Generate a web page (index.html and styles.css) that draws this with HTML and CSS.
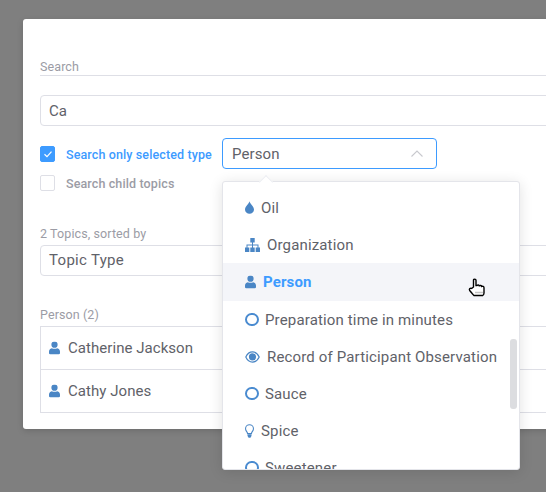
FILE: index.html
```html
<!DOCTYPE html>
<html lang="en">
<head>
    <meta charset="UTF-8">
    <title>Search</title>
    <link rel="stylesheet" href="styles.css">
</head>
<body>
    <div class="dialog">
        <div class="section-label">Search</div>
        <div class="text-input">Ca</div>

        <div class="option-row">
            <span class="check checked">
                <svg viewBox="0 0 16 16" width="16" height="16"><path d="M4.500 8.200l2.500 2.400 4.500-5" fill="none" stroke="#fff" stroke-width="1.200"/></svg>
            </span>
            <span class="option-label active">Search only selected type</span>
            <div class="select open">
                Person
                <svg class="caret" viewBox="0 0 12 7" width="12" height="7"><path d="M0.500 6.500L6 1l5.500 5.500" fill="none" stroke="#c8c9ce" stroke-width="1.100"/></svg>
            </div>
        </div>
        <div class="option-row second">
            <span class="check"></span>
            <span class="option-label">Search child topics</span>
        </div>

        <div class="small-label sort-label">2 Topics, sorted by</div>
        <div class="text-input sort">Topic Type</div>

        <div class="small-label group-label">Person (2)</div>
        <div class="result-list">
            <div class="result">
                <svg class="icon" viewBox="0 0 12 14" width="11" height="14"><use href="#user"/></svg>
                Catherine Jackson
            </div>
            <div class="result">
                <svg class="icon" viewBox="0 0 12 14" width="11" height="14"><use href="#user"/></svg>
                Cathy Jones
            </div>
        </div>
    </div>

    <div class="menu">
        <div class="menu-item">
            <svg class="icon" viewBox="0 0 10 14" width="9" height="13"><path d="M5 0C5.600 2.600 10 6 10 9.200A5 4.800 0 0 1 0 9.200C0 6 4.400 2.600 5 0z"/></svg>
            Oil
        </div>
        <div class="menu-item">
            <svg class="icon" viewBox="0 0 15 14" width="15" height="14"><path d="M5.300 0h4.400v4.500H8V6.500h5.500V9.500h-1V7.500H8v2H7v-2H2.500v2h-1V6.500H7V4.500H5.300zM0 9.500h4.300V14H0zM5.300 9.500h4.400V14H5.300zM10.700 9.500H15V14h-4.300z"/></svg>
            Organization
        </div>
        <div class="menu-item hover">
            <svg class="icon" viewBox="0 0 12 14" width="11" height="14"><use href="#user"/></svg>
            Person
        </div>
        <div class="menu-item">
            <span class="ring"></span>
            Preparation time in minutes
        </div>
        <div class="menu-item">
            <svg class="icon" viewBox="0 0 15 12" width="15" height="12">
                <path d="M0.800 6C2.300 2.700 4.700 0.900 7.500 0.900S12.700 2.700 14.200 6C12.700 9.300 10.300 11.100 7.500 11.100S2.300 9.300 0.800 6z" fill="none" stroke="#4a86c5" stroke-width="1.200"/>
                <circle cx="7.500" cy="5.800" r="3.600"/>
            </svg>
            Record of Participant Observation
        </div>
        <div class="menu-item">
            <span class="ring"></span>
            Sauce
        </div>
        <div class="menu-item">
            <svg class="icon" viewBox="0 0 10 15" width="9" height="14"><path d="M5 0a5 5 0 0 0-5 5c0 2.400 1.900 3.400 2.400 6h5.200C8.100 8.400 10 7.400 10 5a5 5 0 0 0-5-5zm0 1.200A3.800 3.800 0 0 1 8.800 5c0 1.700-1.500 2.600-2.200 4.800H3.400C2.700 7.600 1.200 6.700 1.200 5A3.800 3.800 0 0 1 5 1.200zM2.800 11.500h4.400v1.500L6 15H4L2.800 13z"/></svg>
            Spice
        </div>
        <div class="menu-item">
            <span class="ring"></span>
            Sweetener
        </div>
        <div class="scroll-thumb"></div>
    </div>
    <div class="menu-arrow"></div>

    <svg class="pointer" viewBox="0 0 18 19" width="18" height="19">
        <path d="M5.500 9V2.200c0-1.500 2.500-1.500 2.500 0V7.500h1c.8-.8 2-.6 2.300.3.800-.6 2.200-.3 2.400.7.900-.5 2.300 0 2.300 1.300V15c0 1.200-.5 2-1.300 2.500H6c-.8-.3-1-1-1.600-1.700L1.700 12.500C.7 11 2.300 9.600 3.700 10.500z" fill="#fff" stroke="#000" stroke-width="1.400"/>
        <path d="M7.500 14.500h7" stroke="#888" stroke-width="1.300" stroke-dasharray="1 1"/>
    </svg>

    <svg class="defs" width="0" height="0">
        <symbol id="user" viewBox="0 0 12 14">
            <path d="M6 0a3.400 3.400 0 1 1 0 6.800A3.400 3.400 0 0 1 6 0zM3 7.200c1.800 1 4.200 1 6 0 1.900.3 3 1.800 3 3.800v1.500c0 .9-.6 1.500-1.500 1.500h-9C.6 14 0 13.400 0 12.500V11c0-2 1.100-3.500 3-3.800z"/>
        </symbol>
    </svg>
</body>
</html>
```

FILE: styles.css
```css
html, body {
    height: 100%;
}
body {
    margin: 0;
    overflow: hidden;
    background-color: #7f7f7f;
    font-family: Roboto, sans-serif;
    font-size: 15px;
    letter-spacing: 0.1px;
    color: #5f6269;
}
.dialog {
    width: 560px;
    height: 410px;
    box-sizing: border-box;
    margin: 19px 0 0 23px;
    padding: 41px 0 0 17px;
    background-color: #fff;
    border-radius: 3px;
    box-shadow: 0 2px 6px rgba(0, 0, 0, 0.15);
}
.section-label {
    height: 15px;
    border-bottom: 1px solid #dedfe6;
    font-size: 12.5px;
    line-height: 13px;
    color: #9b9ca5;
}
.text-input {
    height: 29px;
    margin-top: 19px;
    padding-left: 8px;
    border: 1px solid #dedfe6;
    border-radius: 4px;
    line-height: 31px;
}
.option-row {
    display: flex;
    align-items: center;
    height: 31px;
    margin-top: 12px;
}
.option-row.second {
    height: 16px;
    margin-top: 6px;
}
.check {
    flex: none;
    box-sizing: border-box;
    width: 15px;
    height: 16px;
    margin-right: 11px;
    border: 1px solid #dedfe6;
    border-radius: 2px;
}
.check.checked {
    background-color: #3d9bff;
    border-color: #3d9bff;
}
.check svg {
    display: block;
    margin: -1px 0 0 -1px;
}
.option-label {
    width: 156px;
    font-size: 12.5px;
    font-weight: 500;
    letter-spacing: 0.12px;
    color: #9b9ca5;
    white-space: nowrap;
}
.option-label.active {
    padding-top: 2px;
    color: #3d9bff;
}
.select {
    position: relative;
    box-sizing: border-box;
    width: 215px;
    height: 31px;
    padding-left: 9px;
    border: 1px solid #3d9bff;
    border-radius: 4px;
    line-height: 31px;
}
.caret {
    position: absolute;
    right: 13px;
    top: 11px;
}
.small-label {
    height: 15px;
    font-size: 12.5px;
    line-height: 15px;
    color: #9b9ca5;
}
.sort-label {
    margin-top: 35px;
}
.text-input.sort {
    margin-top: 4px;
    line-height: 29px;
    letter-spacing: 0.3px;
}
.group-label {
    margin-top: 31px;
}
.result-list {
    margin-top: 4px;
    border-top: 1px solid #dedfe6;
    border-left: 1px solid #dedfe6;
}
.result {
    display: flex;
    align-items: center;
    gap: 8px;
    height: 42px;
    padding-left: 8px;
    border-bottom: 1px solid #dedfe6;
    letter-spacing: 0.05px;
}
.icon {
    flex: none;
    fill: #4a86c5;
}
.menu {
    position: absolute;
    left: 222px;
    top: 181px;
    box-sizing: border-box;
    width: 298px;
    height: 289px;
    padding-top: 7px;
    overflow: hidden;
    background-color: #fff;
    border: 1px solid #e4e5ea;
    border-radius: 3px;
    box-shadow: 0 2px 14px rgba(0, 0, 0, 0.12);
    letter-spacing: 0.15px;
}
.menu-item {
    display: flex;
    align-items: center;
    gap: 7px;
    height: 37px;
    padding-left: 22px;
    white-space: nowrap;
}
.menu-item.hover {
    height: 38px;
    background-color: #f4f5f9;
    color: #3d9bff;
    font-weight: 700;
}
.ring {
    flex: none;
    box-sizing: border-box;
    width: 13.5px;
    height: 13.5px;
    margin-right: -0.5px;
    border: 2.2px solid #4a8bd0;
    border-radius: 50%;
}
.scroll-thumb {
    position: absolute;
    right: 2px;
    top: 157px;
    width: 7px;
    height: 70px;
    background-color: #dcdde0;
    border-radius: 3px;
}
.menu-arrow {
    position: absolute;
    left: 261px;
    top: 177px;
    width: 9px;
    height: 9px;
    background-color: #fff;
    border-top: 1px solid #eceef2;
    border-left: 1px solid #eceef2;
    transform: rotate(45deg);
}
.pointer {
    position: absolute;
    left: 468px;
    top: 278px;
}
.defs {
    position: absolute;
}
```
